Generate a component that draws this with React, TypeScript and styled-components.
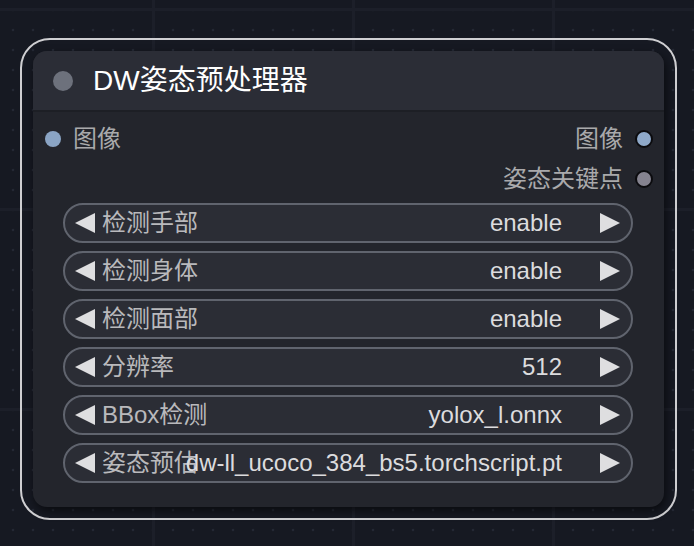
import { createGlobalStyle } from 'styled-components'
import styled from 'styled-components'

const GlobalStyle = createGlobalStyle`
  html, body {
    margin: 0;
    padding: 0;
  }
  body {
    width: 694px;
    height: 546px;
    overflow: hidden;
    background-color: #161922;
    background-image:
      linear-gradient(90deg, transparent 152px, #1c1f29 152px, #1c1f29 155px, transparent 155px),
      linear-gradient(0deg, transparent 189px, #1c1f29 189px, #1c1f29 192px, transparent 192px),
      radial-gradient(circle at 13px 10px, #242834 1.4px, transparent 1.6px);
    background-size: 200px 200px, 200px 200px, 20px 20px;
    font-family: 'Liberation Sans', 'Noto Sans CJK SC', sans-serif;
    line-height: 1.2;
  }
`

const Canvas = styled.div`
  position: relative;
  width: 694px;
  height: 546px;
`

const Selection = styled.div`
  position: absolute;
  left: 20px;
  top: 38px;
  padding: 11px;
  border: 2px solid #cfcfd2;
  border-radius: 30px;
`

const Node = styled.div`
  width: 631px;
  height: 456px;
  border-radius: 14px;
  background: #23252c;
  box-shadow: 2px 4px 10px rgba(0, 0, 0, 0.55);
  display: flex;
  flex-direction: column;
  overflow: hidden;
`

const Title = styled.div`
  height: 59px;
  flex-shrink: 0;
  display: flex;
  align-items: center;
  gap: 20px;
  padding-left: 20px;
  background: #2b2d36;
  border-bottom: 2px solid #1d1f25;
  color: #ffffff;
  font-size: 28px;
`

const TitleDot = styled.span`
  width: 20px;
  height: 20px;
  border-radius: 50%;
  background: #6d717c;
`

const Body = styled.div`
  display: flex;
  flex-direction: column;
  padding: 7px 0 24px;
`

const SlotRow = styled.div<{ $out?: boolean }>`
  height: 40px;
  display: flex;
  align-items: center;
  justify-content: ${(p) => (p.$out ? 'flex-end' : 'flex-start')};
  gap: 12px;
  padding: 0 ${(p) => (p.$out ? '11px' : '12px')};
  color: #a9a9ab;
  font-size: 24px;
`

const SlotDot = styled.span<{ $color: string; $ring?: boolean }>`
  width: ${(p) => (p.$ring ? '18px' : '16px')};
  height: ${(p) => (p.$ring ? '18px' : '16px')};
  box-sizing: border-box;
  border-radius: 50%;
  background: ${(p) => p.$color};
  border: ${(p) => (p.$ring ? '2px solid #0b0b0e' : 'none')};
`

const Widgets = styled.div`
  display: flex;
  flex-direction: column;
  gap: 8px;
  padding: 4px 31px 0 30px;
`

const Widget = styled.div`
  height: 40px;
  box-sizing: border-box;
  display: flex;
  align-items: center;
  padding: 0 11px 0 10px;
  border: 2px solid #60646e;
  border-radius: 20px;
  background: #2b2d35;
  font-size: 24px;
`

const Label = styled.span`
  flex: 1 1 auto;
  min-width: 0;
  white-space: nowrap;
  margin-left: 7px;
  color: #b9b9bc;
`

const Value = styled.span`
  flex-shrink: 0;
  white-space: nowrap;
  margin-right: 38px;
  color: #dcdcde;
`

const Arrow = ({ dir }: { dir: 'left' | 'right' }) => (
  <svg width="20" height="20" viewBox="0 0 20 20" style={{ flexShrink: 0 }}>
    <polygon
      points={dir === 'left' ? '20,0 20,20 0,10' : '0,0 0,20 20,10'}
      fill="#dedee0"
    />
  </svg>
)

const widgets = [
  { label: '检测手部', value: 'enable' },
  { label: '检测身体', value: 'enable' },
  { label: '检测面部', value: 'enable' },
  { label: '分辨率', value: '512' },
  { label: 'BBox检测', value: 'yolox_l.onnx' },
  { label: '姿态预估', value: 'dw-ll_ucoco_384_bs5.torchscript.pt' },
]

export default function App() {
  return (
    <>
      <GlobalStyle />
      <Canvas>
        <Selection>
          <Node>
            <Title>
              <TitleDot />
              DW姿态预处理器
            </Title>
            <Body>
              <SlotRow>
                <SlotDot $color="#8aa4c4" />
                图像
              </SlotRow>
              <SlotRow $out style={{ marginTop: -40 }}>
                图像
                <SlotDot $color="#8fa9c9" $ring />
              </SlotRow>
              <SlotRow $out>
                姿态关键点
                <SlotDot $color="#85838f" $ring />
              </SlotRow>
              <Widgets>
                {widgets.map((w) => (
                  <Widget key={w.label}>
                    <Arrow dir="left" />
                    <Label>{w.label}</Label>
                    <Value>{w.value}</Value>
                    <Arrow dir="right" />
                  </Widget>
                ))}
              </Widgets>
            </Body>
          </Node>
        </Selection>
      </Canvas>
    </>
  )
}
